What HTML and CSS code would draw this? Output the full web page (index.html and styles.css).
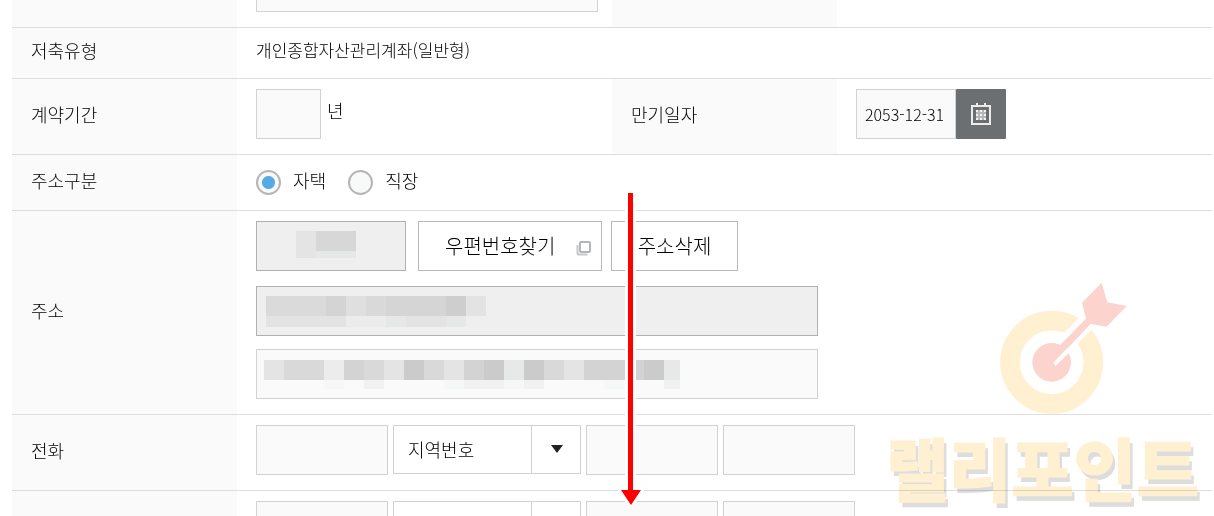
FILE: index.html
```
<!DOCTYPE html>
<html lang="ko">
<head>
    <meta charset="UTF-8">
    <meta name="viewport" content="width=device-width, initial-scale=1.0">
    <title>계좌 개설</title>
    <link rel="stylesheet" href="styles.css">
</head>
<body>
    <form class="account-form">
        <table class="form-table">
            <colgroup>
                <col class="col-label">
                <col>
                <col class="col-label">
                <col>
            </colgroup>
            <tbody>
                <tr class="row-cut">
                    <th></th>
                    <td><input type="text" class="field field-cut" aria-label="계좌"></td>
                    <th></th>
                    <td></td>
                </tr>
                <tr class="row-text">
                    <th scope="row">저축유형</th>
                    <td colspan="3">개인종합자산관리계좌(일반형)</td>
                </tr>
                <tr>
                    <th scope="row"><label for="period">계약기간</label></th>
                    <td>
                        <div class="line">
                            <input type="text" id="period" class="field field-year">
                            <span class="unit">년</span>
                        </div>
                    </td>
                    <th scope="row"><label for="due-date">만기일자</label></th>
                    <td>
                        <div class="line">
                            <input type="text" id="due-date" class="field field-date" value="2053-12-31">
                            <button type="button" class="btn-calendar" aria-label="달력">
                                <svg width="20" height="24" viewBox="0 0 20 24">
                                    <rect x="1" y="4" width="18" height="18" fill="none" stroke="#ececec" stroke-width="2"/>
                                    <path d="M6 1v3M14 1v3" stroke="#ececec" stroke-width="2"/>
                                    <path d="M2 22.5h16" stroke="#ececec" stroke-dasharray="1 1"/>
                                    <path d="M5 8h10v10H5z" fill="#b4b6b8"/>
                                    <path d="M5 9h2m2 0h2m2 0h2M5 13h2m2 0h2m2 0h2M5 17h2m2 0h2m2 0h2" stroke="#f2f2f2" stroke-width="2"/>
                                </svg>
                            </button>
                        </div>
                    </td>
                </tr>
                <tr class="row-radio">
                    <th scope="row">주소구분</th>
                    <td colspan="3">
                        <div class="line radios">
                            <input type="radio" name="place" id="place-home" checked>
                            <label for="place-home">자택</label>
                            <input type="radio" name="place" id="place-work">
                            <label for="place-work">직장</label>
                        </div>
                    </td>
                </tr>
                <tr>
                    <th scope="row">주소</th>
                    <td colspan="3">
                        <div class="line line-zip">
                            <div class="masked">
                                <input type="text" class="field field-zip" aria-label="우편번호" readonly>
                                <svg class="mask" width="150" height="50">
                                    <path fill="#e4e4e4" d="M40 10h20v27h-20z"/>
                                    <path fill="#d7d7d7" d="M60 10h40v20h-40z"/>
                                    <path fill="#e6e7e7" d="M60 30h40v7h-40z"/>
                                </svg>
                            </div>
                            <button type="button" class="btn btn-find">우편번호찾기
                                <svg width="16" height="16" viewBox="0 0 16 16" fill="none" stroke="#b4b5b9">
                                    <rect x="4" y="2" width="10" height="10" rx="1" stroke-width="2"/>
                                    <path d="M1.5 5v8.5a1 1 0 0 0 1 1h9" stroke="#c6c7ca" stroke-width="2"/>
                                </svg>
                            </button>
                            <button type="button" class="btn btn-clear">주소삭제</button>
                        </div>
                        <div class="masked masked-first">
                            <input type="text" class="field field-addr" aria-label="기본주소" readonly>
                            <svg class="mask" width="562" height="50">
                                <path fill="#dadada" d="M10 10h60v20h-60z"/>
                                <path fill="#d4d4d4" d="M70 10h20v20h-20z"/>
                                <path fill="#dfdfdf" d="M90 10h20v20h-20z"/>
                                <path fill="#d9d9d9" d="M110 10h20v20h-20z"/>
                                <path fill="#d5d5d5" d="M130 10h60v20h-60z"/>
                                <path fill="#cecece" d="M190 10h20v20h-20z"/>
                                <path fill="#e3e3e3" d="M210 10h20v20h-20zM10 30h80v11h-80zM150 30h40v11h-40z"/>
                                <path fill="#ececec" d="M90 30h40v11h-40z"/>
                                <path fill="#e6e8e7" d="M130 30h20v11h-20zM190 30h20v11h-20z"/>
                            </svg>
                        </div>
                        <div class="masked">
                            <input type="text" class="field field-addr" aria-label="상세주소">
                            <svg class="mask" width="562" height="50">
                                <path fill="#e4e4e4" d="M8 11h20v20h-20zM128 11h20v20h-20zM188 11h20v20h-20zM308 11h20v20h-20z"/>
                                <path fill="#d9d9d9" d="M28 11h40v20h-40zM108 11h20v20h-20zM168 11h20v20h-20zM288 11h20v20h-20z"/>
                                <path fill="#ececec" d="M68 11h20v20h-20z"/>
                                <path fill="#d3d3d3" d="M88 11h20v20h-20zM208 11h20v20h-20zM328 11h60v20h-60z"/>
                                <path fill="#cbcbcb" d="M148 11h20v20h-20zM228 11h20v20h-20zM268 11h20v20h-20zM388 11h20v20h-20z"/>
                                <path fill="#e7e9e8" d="M248 11h20v20h-20zM408 11h16v20h-16z"/>
                                <path fill="#f1f1f1" d="M108 31h20v9h-20zM208 31h40v9h-40zM268 31h20v9h-20zM408 31h16v9h-16z"/>
                                <path fill="#f6f7f7" d="M68 31h20v9h-20zM188 31h20v9h-20zM248 31h20v9h-20zM348 31h20v9h-20z"/>
                            </svg>
                        </div>
                    </td>
                </tr>
                <tr>
                    <th scope="row">전화</th>
                    <td colspan="3">
                        <div class="line line-tel">
                            <input type="text" class="field field-tel" aria-label="전화 구분">
                            <div class="select-box">
                                <select aria-label="지역번호">
                                    <option>지역번호</option>
                                </select>
                                <svg class="caret" width="12" height="8" viewBox="0 0 12 8"><path d="M0 0h12L6 8z" fill="#222"/></svg>
                            </div>
                            <input type="text" class="field field-tel" aria-label="전화 국번">
                            <input type="text" class="field field-tel" aria-label="전화 번호">
                        </div>
                    </td>
                </tr>
                <tr>
                    <th></th>
                    <td colspan="3">
                        <div class="line line-tel">
                            <input type="text" class="field field-tel" aria-label="휴대폰 구분">
                            <div class="select-box">
                                <select aria-label="휴대폰 앞자리">
                                    <option></option>
                                </select>
                                <svg class="caret" width="12" height="8" viewBox="0 0 12 8"><path d="M0 0h12L6 8z" fill="#222"/></svg>
                            </div>
                            <input type="text" class="field field-tel" aria-label="휴대폰 국번">
                            <input type="text" class="field field-tel" aria-label="휴대폰 번호">
                        </div>
                    </td>
                </tr>
            </tbody>
        </table>
    </form>

    <!-- Scroll arrow -->
    <svg class="scroll-arrow" width="28" height="318" viewBox="0 0 28 318">
        <path d="M8 0h11v294h8v4L14 317 1 298v-4h7z" fill="#fff"/>
        <path d="M11 0h5v297h8L14 312 4 297h7z" fill="#f00"/>
    </svg>

    <!-- Watermark -->
    <svg class="target" width="160" height="150" viewBox="0 0 480 450">
        <circle cx="215" cy="277" r="125" fill="none" stroke="#fff0d2" stroke-width="59"/>
        <circle cx="215" cy="277" r="58" fill="#fdd4cd"/>
        <path d="M300 141L250 191 292 222 340 174z" fill="#fff"/>
        <path d="M365 38l17 59 58 11-60 62-48-8-106 112-20-14L318 146l-12-48z" fill="#fdd4cd"/>
        <path d="M220 278l42-44 14 6-50 48z" fill="#fff"/>
    </svg>
    <div class="brand">랠리포인트</div>
</body>
</html>
```
FILE: styles.css
```
* {
    box-sizing: border-box;
}
body {
    margin: 0;
    height: 100vh;
    overflow: hidden;
    background-color: #fff;
    color: #000;
    font-family: "Noto Sans CJK KR", sans-serif;
    font-size: 18px;
    font-weight: 300;
    line-height: 24px;
}
input, select, button {
    margin: 0;
    font: inherit;
    color: inherit;
    border-radius: 0;
}
.account-form {
    padding: 0 2px 0 12px;
}

/* Table */
.form-table {
    width: 100%;
    table-layout: fixed;
    border-collapse: separate;
    border-spacing: 0;
}
.col-label {
    width: 225px;
}
.form-table th, .form-table td {
    padding: 10px 0 15px 19px;
    border-bottom: 1px solid #dedede;
    text-align: left;
    font-weight: 300;
    vertical-align: middle;
}
.form-table th {
    background-color: #fafafa;
}
.form-table .row-cut th, .form-table .row-cut td {
    padding-top: 0;
}
.form-table .row-text th, .form-table .row-text td {
    padding: 10px 0 16px 19px;
}
.form-table .row-text td {
    font-size: 17px;
}
.form-table .row-radio td {
    padding: 15px 0 15px 19px;
}
.line {
    display: flex;
}

/* Fields */
.field {
    display: block;
    height: 50px;
    padding: 0 8px;
    border: 1px solid #d2d2d2;
    background-color: #fafafa;
}
.field[readonly] {
    border-color: #b0b0b5;
    background-color: #efefef;
}
.field-cut {
    width: 342px;
    height: 12px;
    border-top: 0;
}
.field-year {
    width: 65px;
}
.unit {
    margin: 9px 0 0 6px;
}
.field-date {
    width: 100px;
    font-size: 16px;
}
.field-zip {
    width: 150px;
}
.field-addr {
    width: 562px;
}
.field-tel {
    width: 132px;
}

/* Buttons */
.btn {
    height: 50px;
    border: 1px solid #b9b9bb;
    background-color: #fff;
    font-size: 20px;
    cursor: pointer;
}
.btn-find {
    display: flex;
    align-items: center;
    justify-content: space-between;
    width: 184px;
    margin: 0 9px 0 12px;
    padding: 0 9px 0 26px;
}
.btn-find svg {
    margin-top: 4px;
}
.btn-clear {
    width: 127px;
    padding: 0;
}
.btn-calendar {
    display: flex;
    align-items: center;
    justify-content: center;
    width: 50px;
    height: 50px;
    padding: 0;
    border: 0;
    border-radius: 1px;
    background-color: #6b6f72;
    cursor: pointer;
}

/* Radios */
.radios input {
    appearance: none;
    width: 25px;
    height: 25px;
    border: 2px solid #b5b5b7;
    border-radius: 50%;
    background-color: #f8f9f9;
}
.radios input:checked {
    background-image: radial-gradient(circle, #55a9e6 6px, transparent 7px);
}
.radios label {
    margin: 0 22px 0 12px;
    line-height: 20px;
}

/* Address */
.line-zip {
    margin-bottom: 15px;
}
.masked {
    position: relative;
}
.masked-first {
    margin-bottom: 13px;
}
.mask {
    position: absolute;
    top: 0;
    left: 0;
}

/* Phone */
.line-tel {
    gap: 5px;
}
.select-box {
    position: relative;
}
.select-box select {
    appearance: none;
    width: 188px;
    height: 49px;
    padding: 0 60px 2px 14px;
    border: 1px solid #d2d2d2;
    background: linear-gradient(#d2d2d2, #d2d2d2) no-repeat right 48px top / 1px 100% #fff;
}
.caret {
    position: absolute;
    top: 20px;
    right: 18px;
}

/* Overlays */
.scroll-arrow {
    position: absolute;
    top: 193px;
    left: 617px;
}
.target {
    position: absolute;
    top: 270px;
    right: 74px;
}
.brand {
    position: absolute;
    top: 432px;
    right: 15px;
    color: #fff0d2;
    font-size: 68px;
    font-weight: 900;
    line-height: 70px;
    -webkit-text-stroke: 1px #fff0d2;
    text-shadow: 3px 5px 0 #ddd;
    mix-blend-mode: multiply;
}
```
